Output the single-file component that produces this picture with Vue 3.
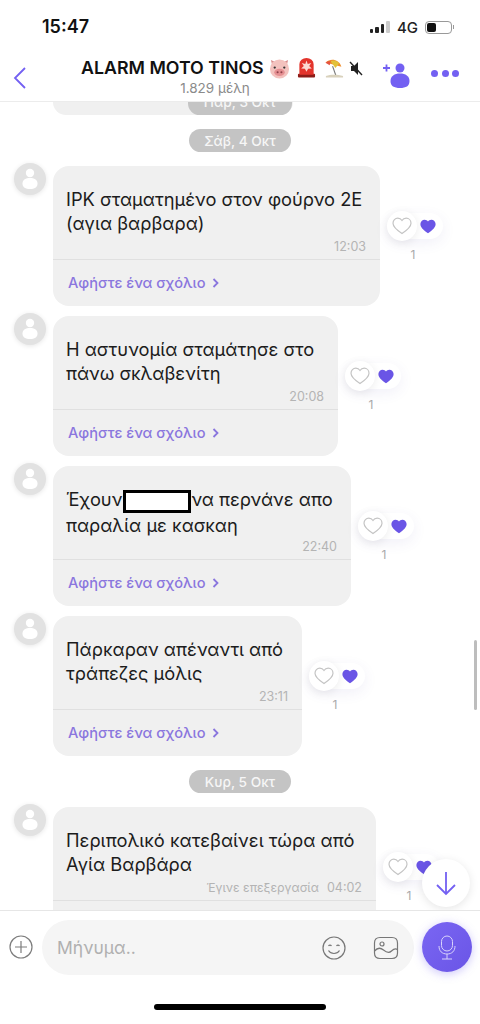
<script setup>
const days = [
  {
    label: 'Σάβ, 4 Οκτ',
    messages: [
      { id: 1, lines: ['IPK σταματημένο στον φούρνο 2Ε', '(αγια βαρβαρα)'], time: '12:03', width: 327 },
      { id: 2, lines: ['Η αστυνομία σταμάτησε στο', 'πάνω σκλαβενίτη'], time: '20:08', width: 285 },
      { id: 3, lines: ['Έχουν', 'παραλία με κασκαη'], redacted: 'να περνάνε απο', time: '22:40', width: 298 },
      { id: 4, lines: ['Πάρκαραν απέναντι από', 'τράπεζες μόλις'], time: '23:11', width: 249 }
    ]
  },
  {
    label: 'Κυρ, 5 Οκτ',
    messages: [
      { id: 5, lines: ['Περιπολικό κατεβαίνει τώρα από', 'Αγία Βαρβάρα'], time: '04:02', edited: true, width: 323 }
    ]
  }
]
</script>

<template>
  <div class="phone">
    <div class="status">
      <span class="clock">15:47</span>
      <div class="status-right">
        <div class="signal">
          <i class="b1"></i><i class="b2"></i><i class="b3"></i><i class="b4"></i>
        </div>
        <span class="net">4G</span>
        <div class="battery"><i></i></div>
        <div class="battery-cap"></div>
      </div>
    </div>

    <header class="head">
      <svg class="back" width="13" height="22" viewBox="0 0 13 22"><path d="M12 1 2 11l10 10" fill="none" stroke="#7360f2" stroke-width="1.800"/></svg>
      <div class="head-mid">
        <div class="title">
          <span>ALARM MOTO TINOS</span>
          <svg class="pig" width="21" height="21" viewBox="0 0 22 22">
            <path d="M2 2l5 2.500L3.500 8zM20 2l-5 2.500L18.500 8z" fill="#d98d8d"/>
            <circle cx="11" cy="11.500" r="10" fill="#f3c2be"/>
            <ellipse cx="11" cy="15" rx="5.500" ry="3.800" fill="#e58f92"/>
            <circle cx="9" cy="15" r="1.100" fill="#8d4048"/><circle cx="13" cy="15" r="1.100" fill="#8d4048"/>
            <circle cx="6" cy="10" r="1.200" fill="#333"/><circle cx="16" cy="10" r="1.200" fill="#333"/>
          </svg>
          <svg class="siren" width="19" height="22" viewBox="0 0 20 22">
            <rect x="1" y="17" width="18" height="4" rx="1" fill="#8d1c18"/>
            <path d="M2.500 18V7a7.500 6.500 0 0 1 15 0v11z" fill="#e3342c"/>
            <path d="M10 3l1.300 3.800 3.700-1-2.200 3.200 2.800 2.600-3.900.1L10 15l-1.700-3.300-3.900-.1 2.800-2.600L5 5.800l3.700 1z" fill="#fbd9d2"/>
          </svg>
          <svg class="beach" width="20" height="21" viewBox="0 0 21 21">
            <path d="M1 7C4 1 13 -1 18 6z" fill="#ef8f2f" transform="rotate(18 10 8)"/>
            <path d="M7 3c3-1.500 6-1 9 2l-4 5z" fill="#e2c23a"/>
            <path d="M1.500 4.500C3 3 5 2.500 7 3l-1 4z" fill="#e5543f"/>
            <path d="M9 8l3.500 10" stroke="#777" stroke-width="1.200"/>
            <path d="M2 18.500c5-2 12-2 18 0v1.500H2z" fill="#d9d2bd"/>
          </svg>
          <svg class="mute" width="14" height="15" viewBox="0 0 14 15">
            <path d="M2 5h3l4-4v13l-4-4H2z" fill="#222"/>
            <path d="M1 1l12 13" stroke="#222" stroke-width="1.400"/>
          </svg>
        </div>
        <div class="members">1.829 μέλη</div>
      </div>
      <svg class="add" width="30" height="28" viewBox="0 0 30 28">
        <path d="M1 7h7M4.500 3.500v7" stroke="#7360f2" stroke-width="1.800"/>
        <circle cx="18" cy="7" r="4.500" fill="#7360f2"/>
        <path d="M8.500 20c0-5 4-7.500 9.500-7.500s9.500 2.500 9.500 7.500c0 5-3.500 7-9.500 7s-9.500-2-9.500-7z" fill="#7360f2"/>
      </svg>
      <div class="dots"><i></i><i></i><i></i></div>
    </header>

    <main class="chat">
      <div class="cut">
        <div class="cut-bubble"></div>
        <div class="pill cut-pill">Παρ, 3 Οκτ</div>
      </div>

      <template v-for="day in days" :key="day.label">
        <div class="pill">{{ day.label }}</div>
        <div v-for="msg in day.messages" :key="msg.id" class="row">
          <div class="avatar">
            <svg width="20" height="22" viewBox="0 0 20 22">
              <circle cx="10" cy="5" r="4.200" fill="#fff"/>
              <path d="M2.500 15.500c0-4 3.500-5.500 7.500-5.500s7.500 1.500 7.500 5.500c0 4-3 5.500-7.500 5.500s-7.500-1.500-7.500-5.500z" fill="#fff"/>
            </svg>
          </div>
          <div class="bubble" :style="{ width: msg.width + 'px' }">
            <div class="text">
              <template v-if="msg.redacted">
                {{ msg.lines[0] }}<span class="redact"></span>{{ msg.redacted }}<br>{{ msg.lines[1] }}
              </template>
              <template v-else>
                {{ msg.lines[0] }}<br>{{ msg.lines[1] }}
              </template>
            </div>
            <div class="time">
              <span v-if="msg.edited" class="edited">Έγινε επεξεργασία</span>{{ msg.time }}
            </div>
            <div class="comment">
              Αφήστε ένα σχόλιο
              <svg width="7" height="10" viewBox="0 0 7 10"><path d="M1.500 1l4 4-4 4" fill="none" stroke="#8a76de" stroke-width="1.800"/></svg>
            </div>
          </div>
          <div class="react">
            <div class="react-pill">
              <div class="heart-off">
                <svg width="20" height="18" viewBox="0 0 20 18"><path d="M10 16.500C4 12.500 1 9.800 1 6.200 1 3.300 3.200 1.200 5.800 1.200c1.800 0 3.300.9 4.200 2.300.9-1.400 2.400-2.300 4.200-2.300C16.800 1.200 19 3.300 19 6.200c0 3.600-3 6.300-9 10.300z" fill="#fff" stroke="#c4c4c4" stroke-width="1.200"/></svg>
              </div>
              <svg class="heart-on" width="16" height="15" viewBox="0 0 20 18"><path d="M10 17.500C3.500 13 .5 10 .5 6 .5 2.900 2.900.5 5.800.5c1.800 0 3.300.9 4.200 2.300.9-1.400 2.400-2.300 4.200-2.300 2.900 0 5.300 2.400 5.300 5.500 0 4-3 7-9.500 11.500z" fill="#6a55e6"/></svg>
            </div>
            <div class="count">1</div>
          </div>
        </div>
      </template>

      <div class="scrollbar"></div>
      <div class="down">
        <svg width="22" height="26" viewBox="0 0 22 26"><path d="M11 2v22M2 15l9 9 9-9" fill="none" stroke="#7360f2" stroke-width="1.800"/></svg>
      </div>
    </main>

    <footer class="composer">
      <svg class="plus" width="24" height="24" viewBox="0 0 24 24">
        <circle cx="12" cy="12" r="11" fill="none" stroke="#7d7d7d" stroke-width="1.200"/>
        <path d="M12 6v12M6 12h12" stroke="#7d7d7d" stroke-width="1.200"/>
      </svg>
      <div class="input">
        <span class="placeholder">Μήνυμα..</span>
        <svg class="smile" width="24" height="24" viewBox="0 0 24 24">
          <circle cx="12" cy="12" r="11" fill="none" stroke="#777" stroke-width="1.200"/>
          <path d="M6.500 10c.8-1.200 2.200-1.200 3 0M14.500 10c.8-1.200 2.200-1.200 3 0M6.500 14.500c2.500 4 8.500 4 11 0" fill="none" stroke="#777" stroke-width="1.200"/>
        </svg>
        <svg width="26" height="24" viewBox="0 0 26 24">
          <path d="M7 1.500h12c3.500 0 5.500 2 5.500 5.500v10c0 3.500-2 5.500-5.500 5.500H7c-3.500 0-5.500-2-5.500-5.500V7c0-3.500 2-5.500 5.500-5.500z" fill="none" stroke="#777" stroke-width="1.200"/>
          <circle cx="9" cy="8" r="2" fill="none" stroke="#777" stroke-width="1.200"/>
          <path d="M1.500 15c3-3.500 6-3.500 9-1s6 3 8 1 4-3 6-1.500" fill="none" stroke="#777" stroke-width="1.200"/>
        </svg>
      </div>
      <div class="mic">
        <svg width="18" height="25" viewBox="0 0 18 25">
          <rect x="3.500" y="1" width="11" height="15" rx="5.500" fill="none" stroke="#d9d3fb" stroke-width="1"/>
          <path d="M1 11c0 5 3 8 8 8s8-3 8-8M9 19v5M4 24h10" fill="none" stroke="#d9d3fb" stroke-width="1"/>
        </svg>
      </div>
    </footer>
    <div class="home-wrap"><div class="home"></div></div>
  </div>
</template>

<style>
html, body {
  margin: 0;
  background: #fff;
}
</style>

<style scoped>
.phone {
  width: 480px;
  height: 1024px;
  display: flex;
  flex-direction: column;
  overflow: hidden;
  background: #fff;
  font-family: Inter, "Noto Sans", sans-serif;
  color: #111;
}
.status {
  height: 50px;
  box-sizing: border-box;
  padding: 16px 26px 0 42px;
  display: flex;
  justify-content: space-between;
  align-items: flex-start;
}
.clock {
  font-size: 18px;
  font-weight: 600;
  line-height: 22px;
}
.status-right {
  display: flex;
  align-items: center;
  height: 22px;
}
.signal {
  display: flex;
  align-items: flex-end;
  gap: 2px;
  height: 12px;
  margin-right: 7px;
}
.signal i {
  width: 3.500px;
  background: #222;
  border-radius: 1px;
}
.signal .b1 {
  height: 4px;
}
.signal .b2 {
  height: 6px;
}
.signal .b3 {
  height: 9px;
}
.signal .b4 {
  height: 12px;
  background: #ccc;
}
.net {
  font-size: 15px;
  font-weight: 500;
  margin-right: 7px;
  color: #222;
}
.battery {
  width: 27px;
  height: 13px;
  box-sizing: border-box;
  border: 1px solid #999;
  border-radius: 4px;
  padding: 1px;
}
.battery i {
  display: block;
  width: 9px;
  height: 9px;
  background: #111;
  border-radius: 2px;
}
.battery-cap {
  width: 1px;
  height: 4px;
  margin-left: 1px;
  background: #999;
}
.head {
  height: 52px;
  box-sizing: border-box;
  border-bottom: 1px solid #ececec;
  position: relative;
  z-index: 2;
  display: flex;
  align-items: flex-start;
  background: #fff;
}
.back {
  margin: 17px 0 0 13px;
  flex: none;
}
.head-mid {
  width: 288px;
  margin: 6px 0 0 55px;
  flex: none;
  text-align: center;
}
.title {
  display: flex;
  align-items: center;
  font-size: 17.800px;
  font-weight: 600;
  line-height: 24px;
  white-space: nowrap;
}
.pig {
  margin-left: 5px;
}
.siren {
  margin-left: 7px;
}
.beach {
  margin-left: 8px;
}
.mute {
  margin-left: 5px;
}
.members {
  font-size: 13.500px;
  line-height: 16px;
  color: #8b8b8b;
  padding-right: 20px;
}
.add {
  margin: 11px 0 0 13px;
  flex: none;
}
.dots {
  display: flex;
  gap: 3.500px;
  margin: 20px 0 0 19px;
}
.dots i {
  width: 7px;
  height: 7px;
  border-radius: 50%;
  background: #7360f2;
}
.chat {
  flex: 1;
  min-height: 0;
  position: relative;
  overflow: hidden;
  display: flex;
  flex-direction: column;
  align-items: flex-start;
}
.cut {
  position: relative;
  width: 100%;
  height: 13px;
  flex: none;
  margin-bottom: 14px;
}
.cut-bubble {
  width: 240px;
  height: 13px;
  margin-left: 53px;
  background: #f0f0f0;
  border-radius: 0 0 16px 16px;
}
.pill {
  align-self: center;
  flex: none;
  height: 23px;
  line-height: 24px;
  width: 102px;
  box-sizing: border-box;
  text-align: center;
  border-radius: 12px;
  background: #c4c4c4;
  color: #f6f6f6;
  font-size: 13.700px;
  font-weight: 500;
  white-space: nowrap;
  margin-bottom: 14px;
}
.row + .pill {
  margin-top: 4px;
}
.cut-pill {
  position: absolute;
  left: 188px;
  bottom: 0;
  width: 104px;
  line-height: 20px;
  margin: 0;
}
.row {
  display: flex;
  flex: none;
  width: 100%;
  height: 140px;
  margin-bottom: 10px;
}
.avatar {
  width: 32px;
  height: 32px;
  flex: none;
  margin: -3px 0 0 14px;
  border-radius: 50%;
  background: #e2e2e2;
  box-shadow: 0 1px 5px rgba(0, 0, 0, .1);
  display: flex;
  align-items: center;
  justify-content: center;
}
.bubble {
  flex: none;
  height: 140px;
  margin-left: 7px;
  box-sizing: border-box;
  background: #f0f0f0;
  border-radius: 16px;
  display: flex;
  flex-direction: column;
}
.text {
  box-sizing: border-box;
  padding: 21px 10px 0 13px;
  height: 69px;
  flex: none;
  font-size: 18.300px;
  line-height: 24px;
  color: #1c1c1c;
  white-space: nowrap;
}
.redact {
  display: inline-block;
  vertical-align: middle;
  box-sizing: border-box;
  width: 68px;
  height: 23px;
  margin: 0 0 0 1px;
  border: 3px solid #000;
  background: #fff;
}
.time {
  height: 25px;
  flex: none;
  line-height: 16px;
  padding: 4px 14px 0 0;
  box-sizing: border-box;
  text-align: right;
  font-size: 12.500px;
  color: #b4b4b4;
  border-bottom: 1px solid #e0e0e0;
  white-space: nowrap;
}
.edited {
  font-size: 12.300px;
  margin-right: 8px;
}
.comment {
  flex: 1;
  padding: 0 0 0 15px;
  display: flex;
  align-items: center;
  gap: 6px;
  font-size: 14.600px;
  font-weight: 500;
  color: #8a76de;
}
.react {
  width: 56px;
  margin: 45px 0 0 7px;
  flex: none;
  display: flex;
  flex-direction: column;
  align-items: center;
}
.react-pill {
  width: 56px;
  height: 26px;
  box-sizing: border-box;
  margin-top: 2px;
  border-radius: 13px;
  background: #fff;
  box-shadow: 0 4px 14px rgba(80, 70, 160, .08);
  position: relative;
  display: flex;
  justify-content: flex-end;
  align-items: center;
  padding-right: 7px;
}
.heart-off {
  position: absolute;
  left: 0;
  top: -2px;
  width: 30px;
  height: 30px;
  border-radius: 50%;
  background: #fff;
  box-shadow: 0 2px 10px rgba(0, 0, 0, .08);
  display: flex;
  align-items: center;
  justify-content: center;
}
.count {
  margin-top: 8px;
  padding-right: 4px;
  font-size: 12px;
  line-height: 16px;
  color: #aaa;
}
.scrollbar {
  position: absolute;
  right: 3px;
  top: 538px;
  width: 3px;
  height: 70px;
  border-radius: 2px;
  background: #bdbdbd;
}
.down {
  position: absolute;
  left: 422px;
  top: 757px;
  width: 48px;
  height: 48px;
  border-radius: 50%;
  background: #fff;
  box-shadow: 0 2px 10px rgba(0, 0, 0, .1);
  display: flex;
  align-items: center;
  justify-content: center;
}
.composer {
  flex: none;
  height: 94px;
  box-sizing: border-box;
  border-top: 1px solid #e6e6e6;
  position: relative;
  z-index: 2;
  background: #fff;
  display: flex;
  align-items: flex-start;
  padding: 9px 8px 0 9px;
}
.plus {
  margin-top: 15px;
  flex: none;
}
.input {
  width: 372px;
  height: 55px;
  margin-left: 9px;
  flex: none;
  box-sizing: border-box;
  border-radius: 28px;
  background: #f5f5f5;
  display: flex;
  align-items: center;
  padding: 0 15px;
}
.placeholder {
  font-size: 17.500px;
  line-height: 24px;
  color: #b0b0b0;
  flex: 1;
}
.smile {
  margin-right: 27px;
}
.mic {
  width: 50px;
  height: 50px;
  margin: 2px 0 0 8px;
  flex: none;
  border-radius: 50%;
  background: linear-gradient(135deg, #7a66f3, #6a55e6);
  box-shadow: 0 2px 10px rgba(115, 96, 242, .35);
  display: flex;
  align-items: center;
  justify-content: center;
}
.home-wrap {
  flex: none;
  height: 20px;
  display: flex;
  justify-content: center;
}
.home {
  width: 172px;
  height: 6px;
  border-radius: 3px;
  background: #000;
}
</style>
